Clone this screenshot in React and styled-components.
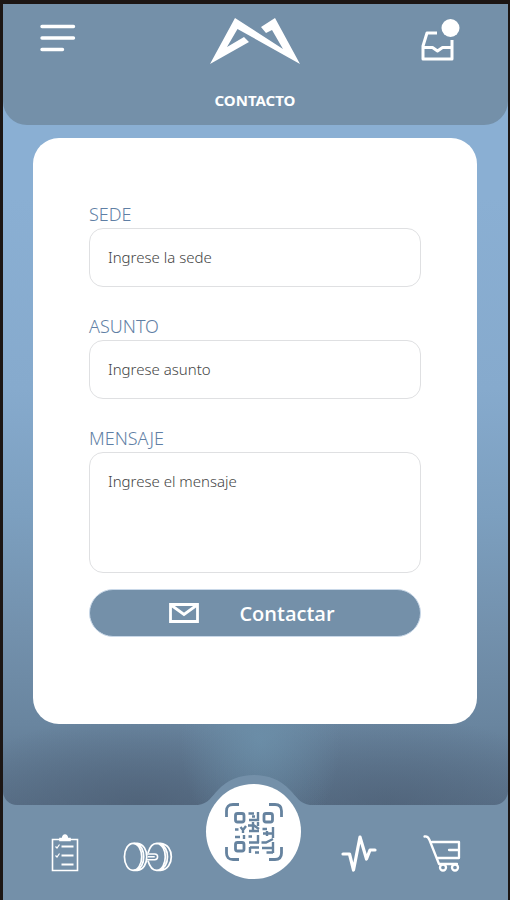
import React, { useState } from 'react';
import styled, { createGlobalStyle } from 'styled-components';

const GlobalStyle = createGlobalStyle`
  * {
    box-sizing: border-box;
  }
  body {
    margin: 0;
    background: #7490a9;
    font-family: 'Noto Sans', 'Open Sans', sans-serif;
  }
`
const Wrapper = styled.div`
  display: flex;
  flex-direction: column;
  min-height: 100vh;
  background-color: #7490a9;
  border: solid #1c1614;
  border-width: 4px 2px 0 3px;
`
const Scene = styled.main`
  border-radius: 0 0 14px 14px;
  padding-bottom: 81px;
  background:
    radial-gradient(ellipse 80px 110px at 51% 92%, rgba(108, 144, 170, 0.8), rgba(108, 144, 170, 0)),
    radial-gradient(ellipse 190px 90px at 27% 100%, rgba(76, 94, 116, 0.7), rgba(76, 94, 116, 0)),
    radial-gradient(ellipse 190px 90px at 76% 100%, rgba(76, 94, 116, 0.6), rgba(76, 94, 116, 0)),
    linear-gradient(#8aafd3 0%, #8aafd3 24%, #86aacd 48%, #7c9fbf 64%, #7391ad 78%, #69859f 90%, #5a7189 100%);
`
const Header = styled.header`
  height: 121px;
  padding: 14px 46px 0 37px;
  background-color: #7490a9;
  border-radius: 0 0 24px 24px;
  color: #fff;
`
const TopRow = styled.div`
  display: grid;
  grid-template-columns: 1fr auto 1fr;
  height: 48px;
`
const IconButton = styled.button`
  display: flex;
  justify-self: ${props => props.$right ? "end" : "start"};
  align-items: flex-start;
  padding: 0;
  border: none;
  background: none;
  color: #fff;
  cursor: pointer;
`
const Logo = styled.svg`
  display: block;
  margin-left: 8px;
`
const Title = styled.h1`
  margin: 22px 0 0 8px;
  font-size: 15px;
  line-height: 24px;
  font-weight: 700;
  text-align: center;
`
const Card = styled.form`
  margin: 13px 31px 0 30px;
  padding: 64px 56px 87px;
  background-color: #fff;
  border-radius: 26px;
`
const Field = styled.div`
  margin-bottom: ${props => props.$last ? "16px" : "27px"};
`
const Label = styled.label`
  display: block;
  padding-bottom: 2px;
  font-size: 18px;
  line-height: 24px;
  font-weight: 300;
  color: #5f7fa5;
`
const Input = styled.input`
  display: block;
  width: 100%;
  height: ${props => props.$tall ? "121px" : "59px"};
  padding: ${props => props.$tall ? "18px 18px" : "0 18px 2px"};
  border: 1px solid #dfe0e2;
  border-radius: 14px;
  background: #fff;
  font-family: inherit;
  font-size: 15px;
  font-weight: 300;
  line-height: 20px;
  color: #444;
  resize: none;
  outline: none;
  &::placeholder {
    color: #444;
    opacity: 1;
  }
`
const SendButton = styled.button`
  display: flex;
  align-items: center;
  justify-content: center;
  gap: 40px;
  width: 100%;
  height: 48px;
  padding: 0 6px 0 0;
  border: 1px solid #c9d8e8;
  border-radius: 24px;
  background-color: #7490a9;
  color: #fff;
  font-family: 'Open Sans', sans-serif;
  font-size: 20px;
  font-weight: 600;
  cursor: pointer;
`
const Nav = styled.nav`
  position: relative;
  display: flex;
  justify-content: center;
  gap: 33px;
  padding-right: 4px;
  color: #fff;
`
const Bump = styled.svg`
  position: absolute;
  bottom: 100%;
  left: calc(50% - 2px);
  transform: translateX(-50%);
`
const NavLink = styled.a`
  display: flex;
  align-items: center;
  justify-content: center;
  width: 50px;
  height: 96px;
  color: #fff;
`
const QrButton = styled.button`
  position: relative;
  display: flex;
  align-items: center;
  justify-content: center;
  width: 95px;
  height: 95px;
  margin-top: -21px;
  padding: 0;
  border: none;
  border-radius: 50%;
  background-color: #fff;
  color: #66839f;
  cursor: pointer;
`

const MenuIcon = () => (
  <svg width="38" height="36" viewBox="0 0 38 36" fill="none" stroke="currentColor" strokeWidth="3.4" strokeLinecap="round">
    <path d="M2 8.500H33.500M2 20H33.500M2 31.500H22.500" />
  </svg>
)

const InboxIcon = () => (
  <svg width="44" height="46" viewBox="0 0 44 46" fill="none" stroke="currentColor" strokeWidth="3" strokeLinejoin="round">
    <path d="M19 15H9L5 28V41H34V22M5 29.500H14.500L19.500 33L24.500 29.500H34" />
    <circle cx="32.500" cy="10" r="11" fill="#7490a9" stroke="none" />
    <circle cx="32.500" cy="10" r="9" fill="currentColor" stroke="none" />
  </svg>
)

const MailIcon = () => (
  <svg width="30" height="20" viewBox="0 0 30 20" fill="none" stroke="currentColor" strokeWidth="2.800">
    <path d="M1.500 1.500H28.500V18.500H1.500ZM2 2L15 11.500L28 2" />
  </svg>
)

const ListIcon = () => (
  <svg width="28" height="38" viewBox="0 0 28 38" fill="none" stroke="currentColor" strokeWidth="1.600">
    <path d="M9 5.500H1.500V36.500H26.500V5.500H19" />
    <path d="M9 6.500V4.500H11.500Q12 1 14 1Q16 1 16.500 4.500H19V6.500Z" fill="currentColor" />
    <path d="M4.500 12.500L6 14L8.500 10.500M4.500 21.500L6 23L8.500 19.500" strokeWidth="1.200" />
    <path d="M10.500 12.500H22.500M10.500 21.500H22.500M10.500 30.500H22.500" strokeWidth="1.800" />
  </svg>
)

const DumbbellIcon = () => (
  <svg width="52" height="40" viewBox="0 0 52 40" fill="none" stroke="currentColor" strokeWidth="1.800">
    <ellipse cx="10.500" cy="24" rx="9" ry="14" />
    <path d="M11 10H15C28 11 28 37 15 38H11M14 10C24 15 24 33 14 38" />
    <path d="M26 20C28 13 31 10 35 10C47 11 47 37 35 38C31 38 28 35 26 28M35 10H39C54 11 54 37 39 38H35M38 10C49 15 49 33 38 38" />
    <path d="M25 21H33Q36 21 36 24Q36 27 33 27H25M26 24H33" strokeWidth="1.600" />
  </svg>
)

const PulseIcon = () => (
  <svg width="36" height="38" viewBox="0 0 36 38" fill="none" stroke="currentColor" strokeWidth="3.200" strokeLinecap="round" strokeLinejoin="round">
    <path d="M2 20H8.500L12.500 36L19 3L25.500 25L29 16H34" />
  </svg>
)

const CartIcon = () => (
  <svg width="38" height="38" viewBox="0 0 38 38" fill="none" stroke="currentColor" strokeWidth="2.300" strokeLinecap="round" strokeLinejoin="round">
    <path d="M1.500 2.500Q5 2 6.500 6L16 30H34M9 8H36V24H14M26 16H36" />
    <circle cx="20" cy="33.500" r="3" />
    <circle cx="32" cy="33.500" r="3" />
  </svg>
)

const QrIcon = () => (
  <svg width="58" height="58" viewBox="0 0 58 58" fill="none" stroke="currentColor" strokeWidth="2.800">
    <path d="M1.500 14V8Q1.500 1.500 8 1.500H14M44 1.500H50Q56.500 1.500 56.500 8V14M56.500 44V50Q56.500 56.500 50 56.500H44M14 56.500H8Q1.500 56.500 1.500 50V44" />
    <rect x="10.500" y="10.500" width="8.500" height="8.500" rx="2" />
    <rect x="39" y="10.500" width="8.500" height="8.500" rx="2" />
    <rect x="10.500" y="39.500" width="8.500" height="8.500" rx="2" />
    <path d="M23.500 10.500H29M33 9V18M24 17H34M27 13.500H30M28 19V27M23 22.500H29L34 26M33 19V23M24 28H34M10 26.500H13.500M15.500 24L18 27L21 23M18 27V30M10 34H15M19 32V36M23.500 33.500H27M24 39.500H34M33 32V40M25 44V50M25 44.500H34M30 49.500H34M37.500 26H42M48 24V35M38 30.500H48M42 28V33M36.500 39.500H41L48 36M37 45H48.500M48 39V50M41.500 49.500H48" strokeWidth="2.400" />
  </svg>
)

function App() {
  const [form, setForm] = useState({ sede: "", asunto: "", mensaje: "" })

  function handleChange(e) {
    setForm({ ...form, [e.target.id]: e.target.value })
  }
  function handleSubmit(e) {
    e.preventDefault()
  }

  return (
    <>
      <GlobalStyle />
      <Wrapper>
        <Scene>
          <Header>
            <TopRow>
              <IconButton aria-label="Menú"><MenuIcon /></IconButton>
              <Logo width="90" height="46" viewBox="0 0 90 46" fill="#fff">
                <path d="M0 46L25 0L73 31L62 12L56 15L51 9L65 0L90 46L27.500 11L17 29L34 19L39 24Z" />
              </Logo>
              <IconButton $right aria-label="Bandeja"><InboxIcon /></IconButton>
            </TopRow>
            <Title>CONTACTO</Title>
          </Header>
          <Card onSubmit={handleSubmit}>
            <Field>
              <Label htmlFor="sede">SEDE</Label>
              <Input id="sede" type="text" placeholder="Ingrese la sede" value={form.sede} onChange={handleChange} />
            </Field>
            <Field>
              <Label htmlFor="asunto">ASUNTO</Label>
              <Input id="asunto" type="text" placeholder="Ingrese asunto" value={form.asunto} onChange={handleChange} />
            </Field>
            <Field $last>
              <Label htmlFor="mensaje">MENSAJE</Label>
              <Input as="textarea" $tall id="mensaje" placeholder="Ingrese el mensaje" value={form.mensaje} onChange={handleChange} />
            </Field>
            <SendButton type="submit"><MailIcon />Contactar</SendButton>
          </Card>
        </Scene>
        <Nav>
          <Bump width="112" height="30" viewBox="0 0 112 30" fill="#7490a9">
            <path d="M0 30C10 29 14 21 20 15C29 5 42 0 56 0C70 0 83 5 92 15C98 21 102 29 112 30Z" />
          </Bump>
          <NavLink href="#rutina" aria-label="Rutina"><ListIcon /></NavLink>
          <NavLink href="#ejercicios" aria-label="Ejercicios"><DumbbellIcon /></NavLink>
          <QrButton aria-label="Código QR"><QrIcon /></QrButton>
          <NavLink href="#actividad" aria-label="Actividad"><PulseIcon /></NavLink>
          <NavLink href="#tienda" aria-label="Tienda"><CartIcon /></NavLink>
        </Nav>
      </Wrapper>
    </>
  )
}

export default App;
